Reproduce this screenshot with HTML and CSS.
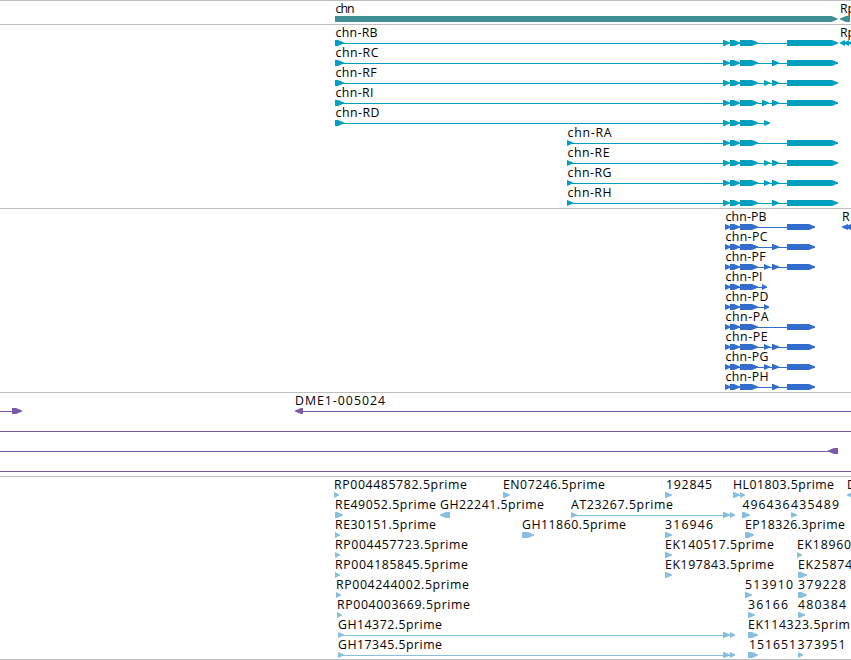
FILE: index.html
```html
<!DOCTYPE html>
<html lang="en">
<head>
<meta charset="utf-8">
<title>chn</title>
<link rel="stylesheet" href="styles.css">
</head>
<body>
<main class="browser">
<section class="track gene"></section>
<section class="track transcript"></section>
<section class="track protein"></section>
<section class="track insertion"></section>
<section class="track est"></section>
</main>
<script src="tracks.js"></script>
</body>
</html>
```
FILE: styles.css
```css
* { box-sizing: border-box; }
body { margin: 0; background: #fff; }
.browser { width: 851px; height: 660px; display: grid; grid-template-rows: 24px 184px 184px 84px 184px; overflow: hidden; }
.track { border-top: 1px solid #bebebe; overflow: hidden; }
.track svg { display: block; width: 100%; height: 100%; }
.track text { font: 12.3px "Open Sans", "Noto Sans", sans-serif; fill: #000; }
.gene { color: #3f8e92; }
.transcript { color: #009fc0; }
.protein { color: #326ccc; }
.insertion { color: #7a59ab; }
.est { color: #88bede; border-bottom: 1px solid #bebebe; }
.line { fill: currentColor; shape-rendering: crispEdges; }
.arrow { fill: currentColor; }
```
FILE: tracks.js
```js
// Row: { t: [[label, x, width]], l: [[start, end]], r: right arrows, b: left arrows }
const head = [[723, 730], [730, 740], [740, 758]];
const pHead = [[725, 731], [730, 740], [740, 758]];
const rna = (name, x, end, extra, tail = true) => ({
  t: [[name, x + 0.5, end - x]],
  l: [[x, tail ? 838 : 769]],
  r: [[x, x === 335 ? 344 : 573], ...head, ...extra, ...(tail ? [[787, 838]] : [])]
});
const pep = (name, end, extra, tail = true) => ({
  t: [[name, 725.5, end - 725]],
  l: [[725, tail ? 815 : extra[0][1]]],
  r: [...pHead, ...extra, ...(tail ? [[787, 815]] : [])]
});
const A = [764, 770], B = [772, 779], C = [762, 769];
const transcripts = [
  rna('chn-RB', 335, 377, []), rna('chn-RC', 335, 378, [B]),
  rna('chn-RF', 335, 376, [A, B]), rna('chn-RI', 335, 373, [C, B]),
  rna('chn-RD', 335, 379, [A], false), rna('chn-RA', 567, 611, []),
  rna('chn-RE', 567, 609, [A, B]), rna('chn-RG', 567, 611, [A, B]),
  rna('chn-RH', 567, 611, [B])
];
transcripts[0].t.push(['Rp', 840, 15]);
transcripts[0].b = [[840, 845], [844, 849], [848, 854]];
const proteins = [
  pep('chn-PB', 766, []), pep('chn-PC', 767, [B]), pep('chn-PF', 765, [A, B]),
  pep('chn-PI', 762, [[762, 767]], false), pep('chn-PD', 768, [[764, 769]], false),
  pep('chn-PA', 768, []), pep('chn-PE', 767, [A, B]), pep('chn-PG', 768, [A, B]),
  pep('chn-PH', 768, [B])
];
proteins[0].t.push(['R', 842, 8]);
proteins[0].b = [[842, 848], [845, 852], [848, 856]];
const splice = [[723, 730], [730, 735]];
const data = {
  gene: [{ t: [['chn', 335.5, 19], ['Rp', 840, 15]], r: [[335, 837.5]], b: [[840, 850]] }],
  transcript: transcripts,
  protein: proteins,
  insertion: [
    { t: [['DME1-005024', 295, 90]], l: [[0, 12], [297, 851]], r: [[12, 22]], b: [[295, 303]] },
    { l: [[0, 851]] },
    { l: [[0, 830]], b: [[828, 838]] },
    { l: [[0, 851]] }
  ],
  est: [
    { t: [['RP004485782.5prime', 334, 133], ['EN07246.5prime', 503, 102], ['192845', 666, 46], ['HL01803.5prime', 733, 101], ['D', 847, 9]],
      r: [[334, 339], [503, 510], [665, 672], [733, 740], [740, 745]], b: [[847, 854]] },
    { t: [['RE49052.5prime', 335, 101], ['GH22241.5prime', 440, 104], ['AT23267.5prime', 571, 102], ['496436', 742.5, 47], ['435489', 791, 48]],
      l: [[571, 735]], r: [[335, 343], [571, 577], ...splice, [742, 750], [791, 797]], b: [[440, 450]] },
    { t: [['RE30151.5prime', 335, 101], ['GH11860.5prime', 522, 104], ['316946', 665, 48], ['EP18326.3prime', 745, 100]],
      r: [[335, 340], [522, 534], [665, 672], [745, 754]] },
    { t: [['RP004457723.5prime', 335, 133], ['EK140517.5prime', 665, 109], ['EK18960', 797, 54]],
      r: [[335, 340], [665, 672], [797, 802]] },
    { t: [['RP004185845.5prime', 335, 133], ['EK197843.5prime', 665, 109], ['EK25874', 798, 54]],
      r: [[335, 340], [665, 672], [798, 807]] },
    { t: [['RP004244002.5prime', 336, 133], ['513910', 745, 48], ['379228', 798, 48]],
      r: [[336, 341], [745, 752], [798, 807]] },
    { t: [['RP004003669.5prime', 337, 133], ['36166', 748, 40], ['480384', 798, 48]],
      r: [[337, 342], [748, 755], [798, 805]] },
    { t: [['GH14372.5prime', 338, 104], ['EK114323.5prim', 748, 102]],
      l: [[338, 735]], r: [[338, 344], ...splice, [748, 758]] },
    { t: [['GH17345.5prime', 338, 104], ['151651', 749, 47], ['373951', 797.5, 48]],
      l: [[338, 735]], r: [[338, 344], ...splice, [748, 758], [798, 803]] }
  ]
};

// Coordinates start just below each track's 1px top border.
for (const [name, rows] of Object.entries(data)) {
  let out = '';
  rows.forEach((row, i) => {
    const y = 15 + i * 20;
    for (const [a, b] of row.l || [])
      out += `<rect class="line" x="${a}" y="${y + 3}" width="${b - a}" height="1"/>`;
    for (const [a, b] of row.r || []) {
      const s = Math.max(a, b - 6);
      out += `<path class="arrow" d="M${a} ${y}H${s}L${b} ${y + 2.6}V${y + 3.4}L${s} ${y + 6}H${a}Z"/>`;
    }
    for (const [a, b] of row.b || []) {
      const s = Math.min(b, a + 6);
      out += `<path class="arrow" d="M${b} ${y}H${s}L${a} ${y + 2.6}V${y + 3.4}L${s} ${y + 6}H${b}Z"/>`;
    }
    for (const [text, x, w] of row.t || [])
      out += `<text x="${x}" y="${y - 3}" textLength="${w}">${text}</text>`;
  });
  document.querySelector('.' + name).innerHTML = `<svg>${out}</svg>`;
}
```
